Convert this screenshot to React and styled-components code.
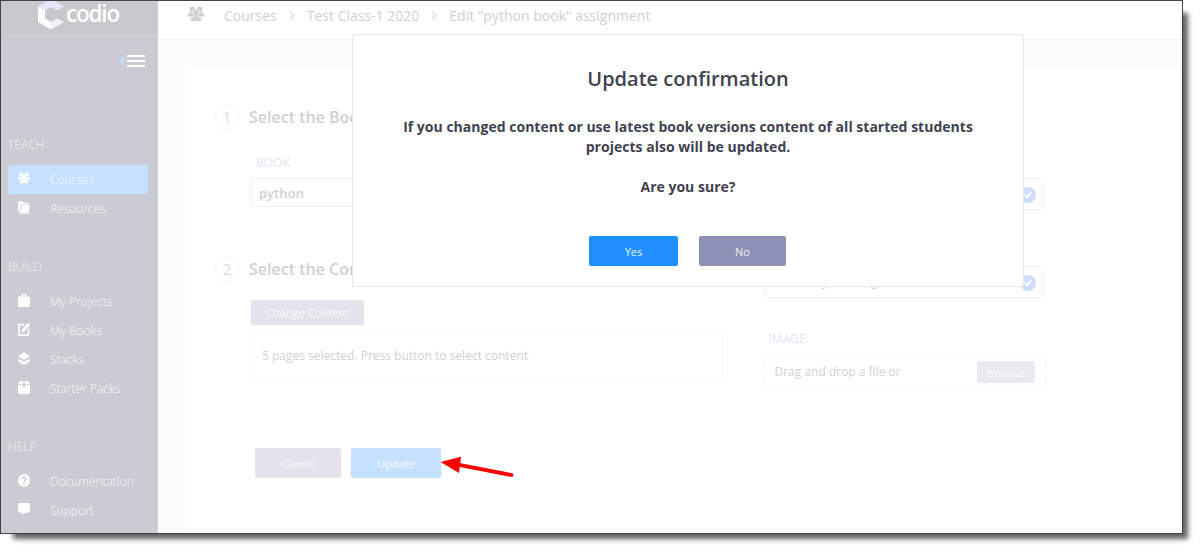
import React from "react";
import styled, { createGlobalStyle } from "styled-components";

const GlobalStyle = createGlobalStyle`
  * { box-sizing: border-box; }
  body { margin: 0; min-height: 552px; background: #fff; font-family: "Open Sans", "Noto Sans", sans-serif; }
  p, h1, h2 { margin: 0; }
  svg { display: block; flex: none; }
`;

const Frame = styled.div`
  position: relative;
  display: flex;
  width: 1183px;
  height: 534px;
  border: 1px solid #444345;
  background: #fcfcfd;
  box-shadow: 9px 9px 5px -4px rgba(0, 0, 0, 0.62);
`;

const Sidebar = styled.nav`
  width: 157px;
  flex: none;
  background: #cbcbd3;
`;

const Brand = styled.div`
  display: flex;
  height: 33px;
  padding-left: 37px;
  background: #c8c8cd;
`;

const BrandName = styled.span`
  margin-left: 2px;
  font-size: 22.500px;
  line-height: 25px;
  font-weight: 600;
  letter-spacing: -1.200px;
  color: #fff;
`;

const MenuToggle = styled.div`
  display: flex;
  justify-content: flex-end;
  height: 102px;
  padding: 20px 13px 0 0;
`;

const Group = styled.section`
  height: ${(p) => p.$height}px;
`;

const GroupTitle = styled.h2`
  height: 29px;
  padding-left: 7px;
  font-size: 12px;
  line-height: 18px;
  font-weight: 300;
  color: #f3f3f6;
`;

const NavItem = styled.div`
  display: flex;
  align-items: center;
  width: 140px;
  height: 29px;
  margin-left: 7px;
  padding: 0 0 1px 10px;
  gap: 20px;
  border-radius: 3px;
  background: ${(p) => (p.$active ? "#c6e1ff" : "transparent")};
  color: #fff;
  font-size: 12px;
  font-weight: 300;
  white-space: nowrap;
  span { opacity: 0.88; }
  svg { margin-bottom: 2px; }
`;

const Main = styled.main`
  flex: 1;
  min-width: 0;
`;

const Breadcrumbs = styled.header`
  display: flex;
  align-items: center;
  height: 39px;
  padding: 0 0 9px 30px;
  border-bottom: 1px solid #f1f1f2;
  background: #fff;
  color: #cfd0d3;
  font-size: 14px;
  white-space: nowrap;
  > svg:first-child { margin-bottom: 3px; }
`;

const Crumb = styled.span`
  margin-left: ${(p) => p.$gap}px;
`;

const Card = styled.div`
  display: flex;
  height: 463px;
  margin: 26px 0 0 26px;
  padding: 38px 0 0 30px;
  border: 1px solid #f9f9fa;
  border-right: 0;
  background: #fff;
`;

const LeftColumn = styled.div`
  width: 549px;
  flex: none;
`;

const RightColumn = styled.div`
  width: 282px;
  padding-top: 73px;
`;

const StepHead = styled.div`
  display: flex;
  align-items: center;
  gap: 10px;
  height: 25px;
  color: #cfd0d4;
  font-size: 16px;
  font-weight: 600;
`;

const StepTitle = styled.span`
  padding-bottom: 2px;
`;

const StepNumber = styled.span`
  display: flex;
  align-items: center;
  justify-content: center;
  width: 24px;
  height: 25px;
  padding-bottom: 2px;
  border: 1px solid #f4f4f5;
  border-radius: 50%;
  font-size: 15px;
  font-weight: 300;
`;

const FieldLabel = styled.div`
  height: ${(p) => p.$height}px;
  padding-left: ${(p) => p.$indent}px;
  font-size: 12px;
  line-height: 18px;
  color: #e4e4ed;
`;

const StepBody = styled.div`
  padding: ${(p) => p.$top}px 0 0 36px;
`;

const TextField = styled.div`
  display: flex;
  align-items: center;
  justify-content: space-between;
  width: ${(p) => p.$width}px;
  height: ${(p) => p.$height}px;
  padding: ${(p) => p.$inset || 0}px 7px 0;
  margin-bottom: ${(p) => p.$after}px;
  border: 1px solid #f2f2f4;
  border-radius: 2px;
  font-size: 13px;
  font-weight: 600;
  color: #d0d1d4;
`;

const FieldValue = styled.span`
  padding-bottom: 4px;
  font-weight: 400;
`;

const Button = styled.button`
  display: flex;
  align-items: center;
  justify-content: center;
  width: ${(p) => p.$width}px;
  height: ${(p) => p.$height}px;
  padding: ${(p) => p.$inset || 0}px 0 0;
  border: 0;
  border-radius: 2px;
  background: ${(p) => p.$bg};
  color: ${(p) => p.$color || "#fafafd"};
  font-family: inherit;
  font-size: 11px;
`;

const Callout = styled.div`
  position: relative;
  width: 477px;
  height: 42px;
  margin-top: 10px;
  padding-left: 10px;
  border: 1px solid #f9f9fa;
  border-radius: 2px;
  background: #fefefe;
  font-size: 12px;
  line-height: 40px;
  color: #d0d1d3;
`;

const CalloutTip = styled.svg`
  position: absolute;
  left: 10px;
  top: -7px;
`;

const Actions = styled.div`
  display: flex;
  gap: 10px;
  padding: 71px 0 0 40px;
`;

const DropZone = styled.div`
  display: flex;
  align-items: center;
  justify-content: space-between;
  width: 282px;
  height: 36px;
  font-size: 12px;
  color: #d0d1d3;
  padding: 0 10px 0 9.500px;
  border: 1px dashed #f1f1f3;
  border-radius: 2px;
`;

const DropHint = styled.span`
  padding-bottom: 1px;
`;

const Dialog = styled.div`
  position: absolute;
  left: 351px;
  top: 33px;
  width: 672px;
  height: 253px;
  padding-top: 30px;
  border: 1px solid #e7e7f1;
  border-radius: 2px;
  background: #fff;
  color: #3f4250;
  text-align: center;
`;

const DialogTitle = styled.h1`
  font-size: 20px;
  line-height: 28px;
  font-weight: 600;
`;

const DialogText = styled.p`
  width: 600px;
  margin: 24px auto 0;
  font-size: 14px;
  line-height: 20px;
  font-weight: 700;
  letter-spacing: 0.015px;
  & + & { margin-top: 20px; }
`;

const DialogActions = styled.div`
  display: flex;
  justify-content: center;
  gap: 21px;
  padding: 39px 1px 0 0;
`;

const Pointer = styled.svg`
  position: absolute;
  left: 438px;
  top: 450px;
`;

const People = ({ size = 12, color = "#fff", gap = "#c6e1ff" }) => (
  <svg width={size} height={size} viewBox="0 0 16 16" fill={color}>
    <circle cx="4.300" cy="3.200" r="2.700" />
    <circle cx="11.700" cy="3.200" r="2.700" />
    <path d="M0 10.500V8.700Q.2 7.200 2.200 6.600l2-.6h7.600l2 .6q2 .6 2.200 2.100v1.800z" />
    <path
      d="M8 3c2 0 3 1.300 3 3.100 0 1.600-.7 2.800-1.500 3.500v1l3 1.200c.6.300.9.900.9 1.600V15H2.600v-1.600c0-.7.300-1.300.9-1.600l3-1.200v-1C5.700 8.900 5 7.700 5 6.100 5 4.300 6 3 8 3z"
      stroke={gap}
      strokeWidth="1.200"
      paintOrder="stroke"
    />
  </svg>
);

const paths = {
  folder: "M0 1Q0 0 1 0h3.200L5.600 1.500h4.200q1 0 1 1v.7H3L.9 10.500Q0 10.500 0 9.500zM3.700 4H12.200L10.700 11.500H1.600z",
  bag: "M3.300 2.300V1.200Q3.300 0 4.500 0h3Q8.700 0 8.700 1.200v1.100H11q1 0 1 1V11q0 1-1 1H1q-1 0-1-1V3.300q0-1 1-1zM4.600 2.300h2.800V1.200H4.600z",
  edit: "M0 1.700Q0 .7 1 .7h6L5.600 2.300H1.600v8.100h8.100V6.300L11.300 4.700V11q0 1-1 1H1q-1 0-1-1zM9.600.3q.4-.4.9 0l1.200 1.200q.5.5 0 1L6.300 7.900l-2.700.7.700-2.800z",
  layers: "M6 0l6 3.700-6 3.700L0 3.700zM1.600 6.400L6 9.100l4.400-2.700L12 7.600v1L6 12 0 8.600v-1z",
  pack: "M2 0H5.400v2.600H0zM6.600 0H10L12 2.600H6.600zM0 3.400h5.100v2.900h1.800V3.400H12V11q0 1-1 1H1q-1 0-1-1z",
  help: "M6 0a6 6 0 1 0 0 12A6 6 0 0 0 6 0zM5.300 8.700h1.500v1.400H5.300zM3.500 4.500Q3.600 2.200 6 2.100q2.400.1 2.500 2.100 0 1.200-1.100 1.900-.7.500-.7 1.500H5.400q0-1.700 1-2.300.7-.5.7-1 0-.9-1.100-.9t-1.200 1.100z",
  chat: "M2.200 0h7.600Q12 0 12 2.200v4.600Q12 9 9.800 9H6.700L4.300 11.500V9H2.200Q0 9 0 6.800V2.200Q0 0 2.200 0z",
};

const Icon = ({ name }) =>
  name === "people" ? (
    <People />
  ) : (
    <svg width="12" height="13" viewBox="0 0 12 12" preserveAspectRatio="none" fill="#fff" fillRule="evenodd">
      <path d={paths[name]} />
    </svg>
  );

const ChevronIcon = styled.svg`
  margin-left: 12px;
`;

const Chevron = () => (
  <ChevronIcon width="7" height="9" viewBox="0 0 7 9">
    <path d="M1 .8l4 3.700-4 3.700" fill="none" stroke="#e4e4ef" strokeWidth="2.200" />
  </ChevronIcon>
);

const Check = () => (
  <svg width="16" height="16" viewBox="0 0 16 16">
    <circle cx="8" cy="8" r="8" fill="#d1dcfe" />
    <path d="M4.600 7.600l2.600 2.700 4-5" fill="none" stroke="#fff" strokeWidth="2" />
  </svg>
);

const groups = [
  { title: "TEACH", height: 122, items: [["people", "Courses", true], ["folder", "Resources"]] },
  { title: "BUILD", height: 180, items: [["bag", "My Projects"], ["edit", "My Books"], ["layers", "Stacks"], ["pack", "Starter Packs"]] },
  { title: "HELP", height: 90, items: [["help", "Documentation"], ["chat", "Support"]] },
];

export default function App() {
  return (
    <>
      <GlobalStyle />
      <Frame>
        <Sidebar>
          <Brand>
            <svg width="26" height="29" viewBox="0 1 26 29">
              <path d="M0 6.500L13-1l13 7.500-7 4L13 7 7 10.500z" fill="#e6e6fa" />
              <path d="M0 6.500l7 4v8l6 3.500v7.500L0 22z" fill="#fff" />
              <path d="M13 22l6-3.500 7 3.500-13 7.500z" fill="#f1f0fe" />
            </svg>
            <BrandName>codio</BrandName>
          </Brand>
          <MenuToggle>
            <svg width="26" height="15" viewBox="0 0 26 15">
              <path d="M5 2.500v9L0 7z" fill="#c1e0ff" />
              <path d="M8 1h18v2H8zM8 6h18v2H8zM8 11h18v2H8z" fill="#fff" />
            </svg>
          </MenuToggle>
          {groups.map((g) => (
            <Group key={g.title} $height={g.height}>
              <GroupTitle>{g.title}</GroupTitle>
              {g.items.map(([icon, label, active]) => (
                <NavItem key={label} $active={active}>
                  <Icon name={icon} />
                  <span>{label}</span>
                </NavItem>
              ))}
            </Group>
          ))}
        </Sidebar>
        <Main>
          <Breadcrumbs>
            <People size={16} color="#d0d1d4" gap="#fff" />
            <Crumb $gap={20}>Courses</Crumb>
            <Chevron />
            <Crumb $gap={11}>Test Class-1 2020</Crumb>
            <Chevron />
            <Crumb $gap={11}>Edit "python book" assignment</Crumb>
          </Breadcrumbs>
          <Card>
            <LeftColumn>
              <StepHead><StepNumber>1</StepNumber><StepTitle>Select the Book</StepTitle></StepHead>
              <StepBody $top={24}>
                <FieldLabel $height={24} $indent={5}>BOOK</FieldLabel>
                <TextField $width={477} $height={29} $after={50}>python</TextField>
              </StepBody>
              <StepHead><StepNumber>2</StepNumber><StepTitle>Select the Content</StepTitle></StepHead>
              <StepBody $top={18}>
                <Button $width={113} $height={25} $bg="#e3e3eb">Change Content</Button>
                <Callout>
                  <CalloutTip width="14" height="8" viewBox="0 0 14 8">
                    <path d="M1 7.500L7 1l6 6.500" fill="#fefefe" stroke="#f7f7f8" />
                  </CalloutTip>
                  5 pages selected. Press button to select content
                </Callout>
              </StepBody>
              <Actions>
                <Button $width={86} $height={30} $inset={1} $bg="#e3e3eb">Cancel</Button>
                <Button $width={90} $height={30} $inset={1} $bg="#c6e1ff">Update</Button>
              </Actions>
            </LeftColumn>
            <RightColumn>
              <TextField $width={280} $height={32} $inset={2} $after={56}><span /><Check /></TextField>
              <TextField $width={280} $height={32} $inset={2} $after={32}><FieldValue>Thursday reading</FieldValue><Check /></TextField>
              <FieldLabel $height={24} $indent={4.5}>IMAGE</FieldLabel>
              <DropZone>
                <DropHint>Drag and drop a file or</DropHint>
                <Button $width={58} $height={22} $inset={1} $bg="#e9e9ef">browse</Button>
              </DropZone>
            </RightColumn>
          </Card>
        </Main>
        <Dialog role="dialog">
          <DialogTitle>Update confirmation</DialogTitle>
          <DialogText>
            If you changed content or use latest book versions content of all started students
            projects also will be updated.
          </DialogText>
          <DialogText>Are you sure?</DialogText>
          <DialogActions>
            <Button $width={89} $height={30} $inset={1} $bg="#1f8fff" $color="#e6f2ff">Yes</Button>
            <Button $width={87} $height={30} $inset={1} $bg="#8f90b5" $color="#eeeef6">No</Button>
          </DialogActions>
        </Dialog>
        <Pointer width="78" height="30" viewBox="439 451 78 30" fill="#fe0000">
          <path d="M440.500 462L461 456.800 459 473z" />
          <path d="M459 464.800L511.500 475" stroke="#fe0000" strokeWidth="3.800" strokeLinecap="round" />
        </Pointer>
      </Frame>
    </>
  );
}
